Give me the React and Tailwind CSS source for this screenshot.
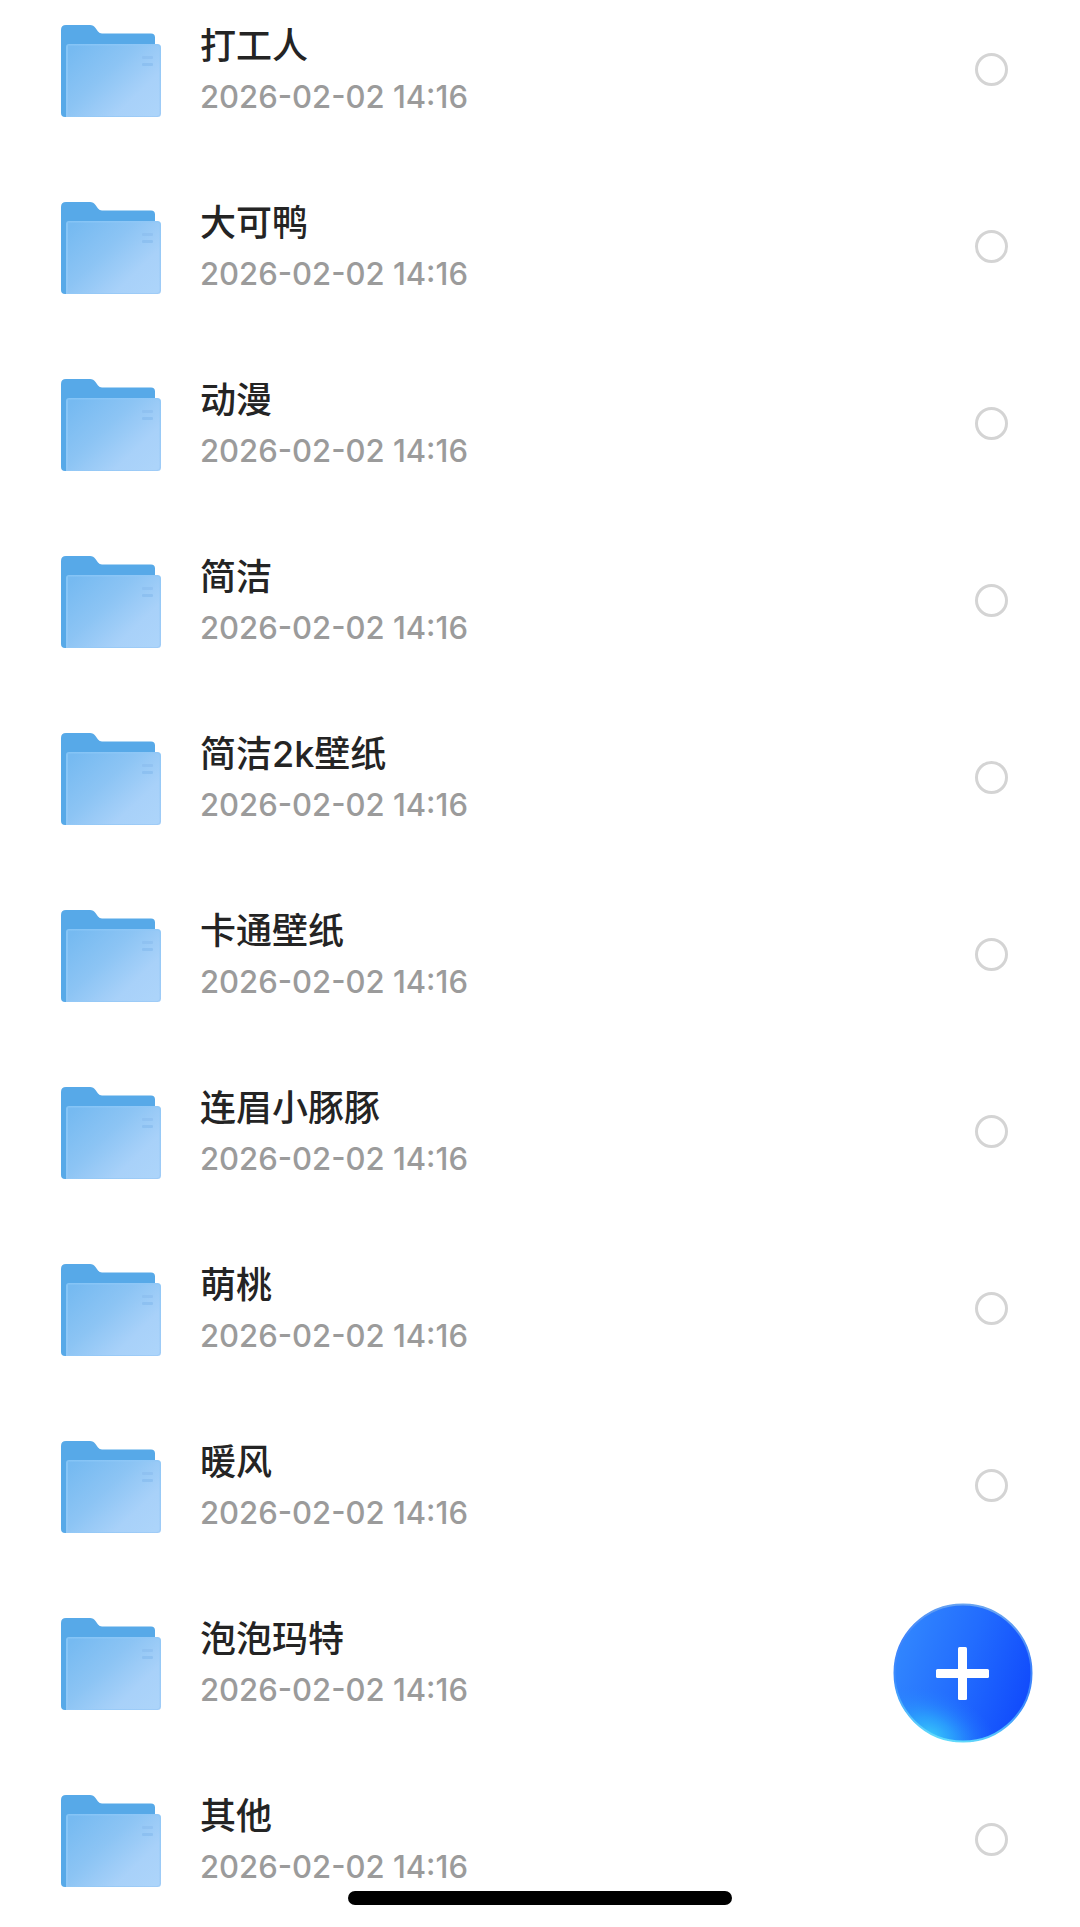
import { useState } from 'react'

const folders = [
  { id: 1, name: '打工人', modified: '2026-02-02 14:16' },
  { id: 2, name: '大可鸭', modified: '2026-02-02 14:16' },
  { id: 3, name: '动漫', modified: '2026-02-02 14:16' },
  { id: 4, name: '简洁', modified: '2026-02-02 14:16' },
  { id: 5, name: '简洁2k壁纸', modified: '2026-02-02 14:16' },
  { id: 6, name: '卡通壁纸', modified: '2026-02-02 14:16' },
  { id: 7, name: '连眉小豚豚', modified: '2026-02-02 14:16' },
  { id: 8, name: '萌桃', modified: '2026-02-02 14:16' },
  { id: 9, name: '暖风', modified: '2026-02-02 14:16' },
  { id: 10, name: '泡泡玛特', modified: '2026-02-02 14:16' },
  { id: 11, name: '其他', modified: '2026-02-02 14:16' },
]

function FolderIcon() {
  return (
    <svg viewBox="0 0 100 92" className="w-[100px] h-[92px] shrink-0" aria-hidden="true">
      <defs>
        <linearGradient id="folder-front" x1="0" y1="0.1" x2="1" y2="0.9">
          <stop offset="0" stopColor="#76baf1" />
          <stop offset="0.4" stopColor="#8cc4f4" />
          <stop offset="0.75" stopColor="#a8d1f9" />
          <stop offset="1" stopColor="#acd4fa" />
        </linearGradient>
        <linearGradient id="folder-edge" x1="0" y1="0" x2="1" y2="1">
          <stop offset="0" stopColor="#84c4f6" />
          <stop offset="1" stopColor="#a0ccf7" />
        </linearGradient>
      </defs>
      <path
        d="M0 5Q0 0 5 0H29Q32.500 0 34.500 3L37 6.500Q38.500 8.500 41 8.500H90Q94 8.500 94 12.500V30H8V92H4Q0 92 0 88Z"
        fill="#57a9e8"
      />
      <path d="M5 22Q5 19 8 19H96.500Q100 19 100 22.500V88.500Q100 92 96.500 92H5Z" fill="url(#folder-edge)" />
      <path d="M7 20.500H95.500Q98.500 20.500 98.500 23.500V88Q98.500 91 95.500 91H7Z" fill="url(#folder-front)" />
      <rect x="81" y="31" width="11" height="3" rx="1" fill="#84b9ec" opacity="0.450" />
      <rect x="81" y="38" width="11" height="3" rx="1" fill="#84b9ec" opacity="0.600" />
    </svg>
  )
}

function FolderRow({ folder, checked, onToggle }) {
  const inputId = `folder-${folder.id}`

  return (
    <li className="flex items-center">
      <FolderIcon />
      <label htmlFor={inputId} className="flex-1 min-w-0 pl-[39px]">
        <span className="block truncate text-[36px] leading-[52px] font-medium text-[#242424]">{folder.name}</span>
        <span className="block text-[31px] leading-[50px] font-medium text-[#9b9b9b]">{folder.modified}</span>
      </label>
      <input
        id={inputId}
        type="checkbox"
        checked={checked}
        onChange={onToggle}
        className="appearance-none shrink-0 size-[33px] mb-1 rounded-full border-3 border-[#d4d4d4] bg-white checked:border-[#1f6bff] checked:bg-[#1f6bff]"
      />
    </li>
  )
}

function AddButton() {
  return (
    <button type="button" aria-label="新建" className="fixed right-[47px] bottom-[184px] size-[140px] rounded-full">
      <svg viewBox="0 0 140 140" className="size-full" aria-hidden="true">
        <defs>
          <linearGradient id="add-base" x1="0.050" y1="0.350" x2="0.950" y2="0.650">
            <stop offset="0" stopColor="#3084fe" />
            <stop offset="0.500" stopColor="#226cfe" />
            <stop offset="1" stopColor="#124dfc" />
          </linearGradient>
          <radialGradient
            id="add-glow"
            gradientUnits="userSpaceOnUse"
            cx="0"
            cy="0"
            r="1"
            gradientTransform="translate(38 132) rotate(24) scale(72 46)"
          >
            <stop offset="0" stopColor="#38c6fa" />
            <stop offset="0.350" stopColor="#2cabfc" stopOpacity="0.750" />
            <stop offset="0.700" stopColor="#2890fd" stopOpacity="0.300" />
            <stop offset="1" stopColor="#2478ff" stopOpacity="0" />
          </radialGradient>
          <linearGradient id="add-rim" x1="0.600" y1="0" x2="0.400" y2="1">
            <stop offset="0" stopColor="#6aa5f0" />
            <stop offset="0.350" stopColor="#3f83fb" />
            <stop offset="0.650" stopColor="#3c8cfd" />
            <stop offset="1" stopColor="#62dcfb" />
          </linearGradient>
        </defs>
        <circle cx="70" cy="70" r="69" fill="url(#add-base)" />
        <circle cx="70" cy="70" r="69" fill="url(#add-glow)" />
        <circle cx="70" cy="70" r="68.500" fill="none" stroke="url(#add-rim)" strokeWidth="2" />
        <rect x="43" y="66" width="53" height="9" rx="1.500" fill="#fff" />
        <rect x="65" y="44" width="9" height="53" rx="1.500" fill="#fff" />
      </svg>
    </button>
  )
}

export default function App() {
  const [selected, setSelected] = useState([])

  const toggle = (id) =>
    setSelected((prev) => (prev.includes(id) ? prev.filter((s) => s !== id) : [...prev, id]))

  return (
    <div className="min-h-screen bg-white font-['Inter','Noto_Sans_CJK_SC',sans-serif]">
      <ul className="flex flex-col gap-[75px] pt-5 pb-8 pl-[61px] pr-[72px]">
        {folders.map((folder) => (
          <FolderRow
            key={folder.id}
            folder={folder}
            checked={selected.includes(folder.id)}
            onToggle={() => toggle(folder.id)}
          />
        ))}
      </ul>

      <AddButton />

      <div className="fixed bottom-[22px] left-1/2 -translate-x-1/2 w-[384px] h-[14px] rounded-full bg-black" />
    </div>
  )
}
